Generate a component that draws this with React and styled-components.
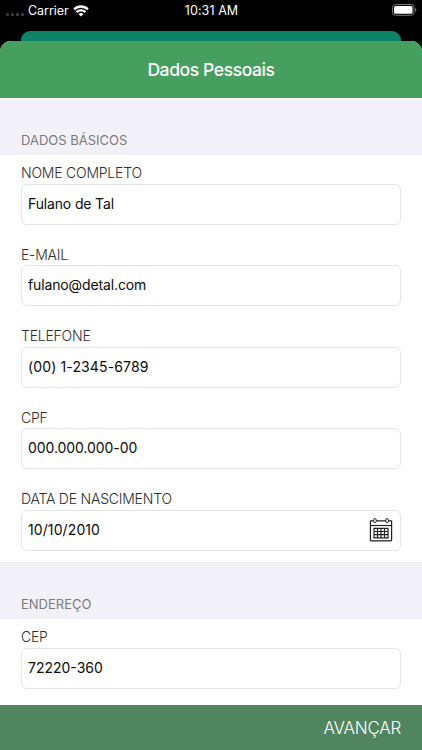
import React from 'react';
import styled, { createGlobalStyle } from 'styled-components';

const GlobalStyle = createGlobalStyle`
  * {
    box-sizing: border-box;
  }

  body {
    margin: 0;
    background-color: #000;
    font-family: Inter, 'Liberation Sans', sans-serif;
  }
`;

const Screen = styled.div`
  display: flex;
  flex-direction: column;
  width: 422px;
  height: 750px;
  overflow: hidden;
  background-color: #000;
`;

const StatusBar = styled.div`
  display: grid;
  grid-template-columns: 1fr auto 1fr;
  align-items: center;
  flex: none;
  height: 21px;
  margin-bottom: 10px;
  padding: 0 5px 0 6px;
  color: #fff;
  font-size: 12.5px;
  line-height: 20px;
`;

const Carrier = styled.div`
  display: flex;
  align-items: center;
  gap: 4px;
  letter-spacing: -0.05px;
`;

const Signal = styled.div`
  display: flex;
  gap: 2px;
  margin-top: 7px;

  span {
    width: 3px;
    height: 3px;
    border-radius: 50%;
    background-color: #464646;
  }
`;

const Clock = styled.div`
  letter-spacing: 0.08px;
`;

const BatteryIcon = styled.svg`
  justify-self: end;
  margin-bottom: 1px;
`;

const BackSheet = styled.div`
  flex: none;
  height: 10px;
  margin: 0 21px;
  border-radius: 9px 9px 0 0;
  background-color: #0d8468;
`;

const Sheet = styled.div`
  display: flex;
  flex: 1;
  flex-direction: column;
  min-height: 0;
  overflow: hidden;
  border-radius: 11px 11px 0 0;
  background-color: #fff;
`;

const Header = styled.header`
  display: flex;
  align-items: center;
  justify-content: center;
  flex: none;
  height: 57px;
  background-color: #469f5e;
  color: #fff;
  font-size: 17.5px;
  font-weight: 500;
  letter-spacing: -0.4px;
`;

const Form = styled.main`
  flex: 1;
  min-height: 0;
  overflow: hidden;
`;

const SectionTitle = styled.h2`
  display: flex;
  align-items: flex-end;
  height: 56.5px;
  margin: 0;
  padding: 0 21px 5px;
  background-color: #f2f1f7;
  color: #7b7b80;
  font-size: 13px;
  font-weight: 400;
  line-height: 20px;
`;

const Fields = styled.div`
  display: flex;
  flex-direction: column;
  gap: 23px;
  padding: 9.5px 21px 13.5px;
`;

const Field = styled.label`
  display: block;
  height: 58.5px;
`;

const Label = styled.span`
  display: block;
  height: 19.7px;
  color: #2d2d2d;
  font-size: 14px;
  font-weight: 300;
  letter-spacing: -0.22px;
  line-height: 18px;
`;

const InputBox = styled.div`
  display: flex;
  align-items: center;
  justify-content: space-between;
  height: 41px;
  padding: 0 7px 1px 6px;
  border: 1px solid #e4e4e6;
  border-radius: 6px;
`;

const Input = styled.input`
  flex: 1;
  min-width: 0;
  padding: 0 0 1px;
  border: 0;
  outline: 0;
  background: none;
  color: #0a0a0a;
  font-family: inherit;
  font-size: 14px;
  letter-spacing: ${({ $spacing }) => $spacing || 0}px;
`;

const Footer = styled.footer`
  display: flex;
  align-items: center;
  justify-content: flex-end;
  flex: none;
  height: 45.5px;
  padding: 1px 21px 0;
  background-color: #51855f;
`;

const NextButton = styled.button`
  padding: 0;
  border: 0;
  background: none;
  color: #fff;
  font-family: inherit;
  font-size: 17px;
  font-weight: 300;
  letter-spacing: -0.25px;
`;

const WifiIcon = () => (
  <svg width="16" height="12" viewBox="0 0 16 12" fill="none">
    <path d="M1.1 4.4C5 .5 11 .5 14.9 4.4" stroke="#fff" strokeWidth="2.3" />
    <path d="M3.5 7.1C6 4.7 10 4.7 12.5 7.1" stroke="#fff" strokeWidth="2.2" />
    <path d="M5.5 9C7 7.6 9 7.6 10.5 9L8 11.6z" fill="#fff" />
  </svg>
);

const Battery = () => (
  <BatteryIcon width="25" height="12" viewBox="0 0 25 12" fill="none">
    <rect x=".5" y=".5" width="21.5" height="10.8" rx="3" stroke="#777" />
    <rect x="2" y="2" width="18.5" height="7.8" rx="1.6" fill="#fff" />
    <path d="M23.2 4v4c1.6-.6 1.6-3.4 0-4z" fill="#777" />
  </BatteryIcon>
);

const CalendarIcon = () => (
  <svg width="24" height="24" viewBox="0 0 24 24" fill="none" stroke="#222">
    <rect x="1.4" y="2.8" width="21.2" height="20" rx=".5" strokeWidth="1.2" />
    <path d="M1.4 7.5h21.2" strokeWidth="1.2" />
    <rect x="4.6" y=".6" width="2.6" height="4" rx="1.2" fill="#fff" />
    <rect x="16.8" y=".6" width="2.6" height="4" rx="1.2" fill="#fff" />
    <path
      d="M5 10.3h14v9.6H5zM8.5 10.3v9.6M12 10.3v9.6M15.5 10.3v9.6M5 13.5h14M5 16.7h14"
      strokeWidth="1.2"
    />
  </svg>
);

const FormField = ({ label, value, spacing, icon }) => (
  <Field>
    <Label>{label}</Label>
    <InputBox>
      <Input defaultValue={value} $spacing={spacing} />
      {icon}
    </InputBox>
  </Field>
);

const App = () => {
  return (
    <Screen>
      <GlobalStyle />
      <StatusBar>
        <Carrier>
          <Signal>
            <span />
            <span />
            <span />
            <span />
          </Signal>
          Carrier
          <WifiIcon />
        </Carrier>
        <Clock>10:31 AM</Clock>
        <Battery />
      </StatusBar>
      <BackSheet />
      <Sheet>
        <Header>Dados Pessoais</Header>
        <Form>
          <SectionTitle>DADOS BÁSICOS</SectionTitle>
          <Fields>
            <FormField
              label="NOME COMPLETO"
              value="Fulano de Tal"
              spacing={-0.15}
            />
            <FormField
              label="E-MAIL"
              value="fulano@detal.com"
              spacing={-0.13}
            />
            <FormField
              label="TELEFONE"
              value="(00) 1-2345-6789"
              spacing={0.13}
            />
            <FormField label="CPF" value="000.000.000-00" spacing={-0.07} />
            <FormField
              label="DATA DE NASCIMENTO"
              value="10/10/2010"
              spacing={0.1}
              icon={<CalendarIcon />}
            />
          </Fields>
          <SectionTitle>ENDEREÇO</SectionTitle>
          <Fields>
            <FormField label="CEP" value="72220-360" />
          </Fields>
        </Form>
        <Footer>
          <NextButton>AVANÇAR</NextButton>
        </Footer>
      </Sheet>
    </Screen>
  );
};

export default App;
